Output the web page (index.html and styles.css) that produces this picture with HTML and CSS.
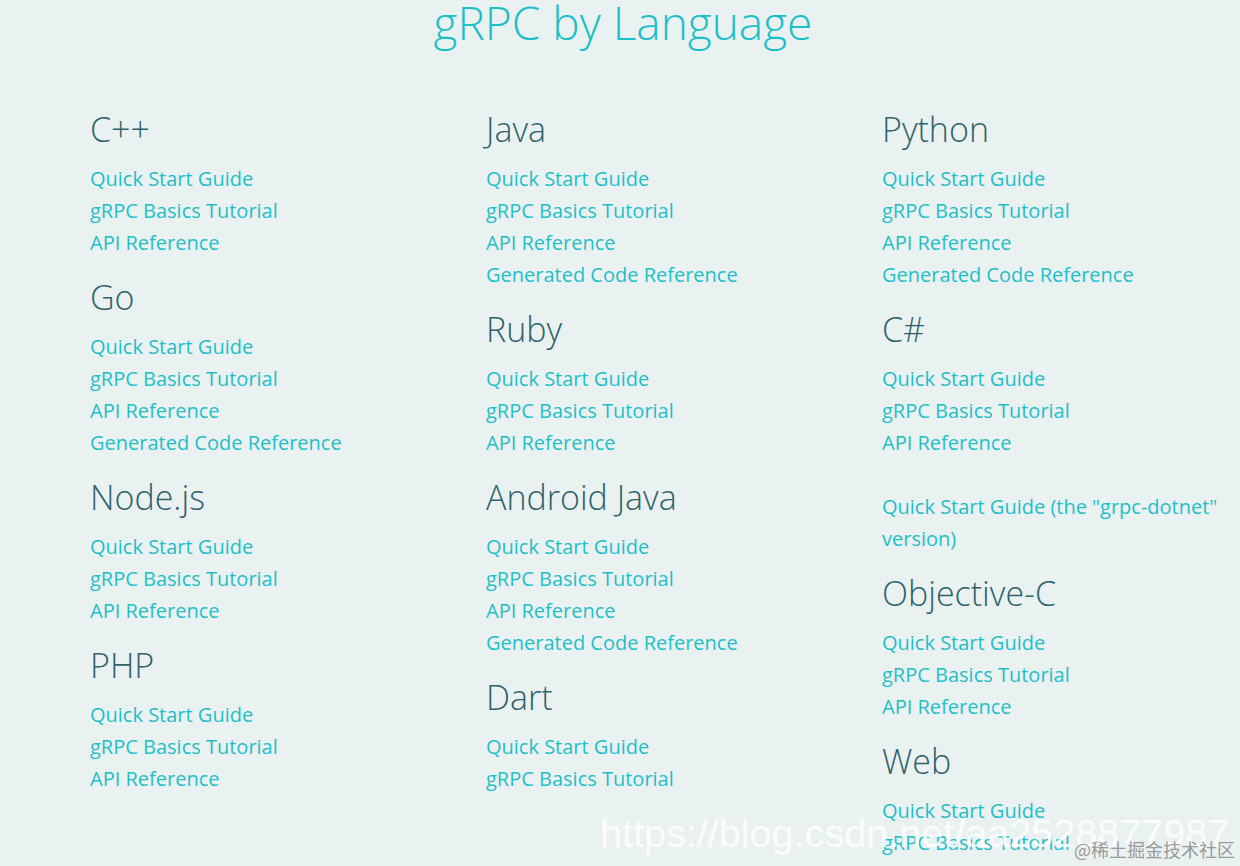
FILE: index.html
```html
<!DOCTYPE html>
<html>
<head>
<meta charset="utf-8">
<link rel="stylesheet" href="styles.css">
</head>
<body>
<div class="page">
  <h1 class="title">gRPC by Language</h1>
  <div class="langs">
    <div class="col">
      <section class="lang">
        <h3>C++</h3>
        <ul><li><a>Quick Start Guide</a></li><li><a>gRPC Basics Tutorial</a></li><li><a>API Reference</a></li></ul>
      </section>
      <section class="lang">
        <h3>Go</h3>
        <ul><li><a>Quick Start Guide</a></li><li><a>gRPC Basics Tutorial</a></li><li><a>API Reference</a></li><li><a>Generated Code Reference</a></li></ul>
      </section>
      <section class="lang">
        <h3>Node.js</h3>
        <ul><li><a>Quick Start Guide</a></li><li><a>gRPC Basics Tutorial</a></li><li><a>API Reference</a></li></ul>
      </section>
      <section class="lang">
        <h3>PHP</h3>
        <ul><li><a>Quick Start Guide</a></li><li><a>gRPC Basics Tutorial</a></li><li><a>API Reference</a></li></ul>
      </section>
    </div>
    <div class="col">
      <section class="lang">
        <h3>Java</h3>
        <ul><li><a>Quick Start Guide</a></li><li><a>gRPC Basics Tutorial</a></li><li><a>API Reference</a></li><li><a>Generated Code Reference</a></li></ul>
      </section>
      <section class="lang">
        <h3>Ruby</h3>
        <ul><li><a>Quick Start Guide</a></li><li><a>gRPC Basics Tutorial</a></li><li><a>API Reference</a></li></ul>
      </section>
      <section class="lang">
        <h3>Android Java</h3>
        <ul><li><a>Quick Start Guide</a></li><li><a>gRPC Basics Tutorial</a></li><li><a>API Reference</a></li><li><a>Generated Code Reference</a></li></ul>
      </section>
      <section class="lang">
        <h3>Dart</h3>
        <ul><li><a>Quick Start Guide</a></li><li><a>gRPC Basics Tutorial</a></li></ul>
      </section>
    </div>
    <div class="col">
      <section class="lang">
        <h3>Python</h3>
        <ul><li><a>Quick Start Guide</a></li><li><a>gRPC Basics Tutorial</a></li><li><a>API Reference</a></li><li><a>Generated Code Reference</a></li></ul>
      </section>
      <section class="lang">
        <h3>C#</h3>
        <ul><li><a>Quick Start Guide</a></li><li><a>gRPC Basics Tutorial</a></li><li><a>API Reference</a></li><li class="spaced"><a>Quick Start Guide (the "grpc-dotnet" version)</a></li></ul>
      </section>
      <section class="lang">
        <h3>Objective-C</h3>
        <ul><li><a>Quick Start Guide</a></li><li><a>gRPC Basics Tutorial</a></li><li><a>API Reference</a></li></ul>
      </section>
      <section class="lang">
        <h3>Web</h3>
        <ul><li><a>Quick Start Guide</a></li><li><a>gRPC Basics Tutorial</a></li></ul>
      </section>
    </div>
  </div>
</div>
<div class="watermark">https://blog.csdn.net/aa2528877987</div>
<div class="credit">@稀土掘金技术社区</div>
</body>
</html>
```
FILE: styles.css
```css
html, body {
  margin: 0;
  padding: 0;
  background: #eaf2f1;
  height: 100%;
  overflow: hidden;
}
body {
  font-family: "Open Sans", "Noto Sans", sans-serif;
  position: relative;
}
.page {
  width: 1240px;
}
.title {
  margin: -8px 0 0 0;
  padding-left: 6px;
  text-align: center;
  font-weight: 300;
  font-size: 46px;
  line-height: 60px;
  color: #1cbfc8;
}
.langs {
  display: grid;
  grid-template-columns: 396px 396px 1fr;
  padding-left: 90px;
  margin-top: 57px;
}
.lang h3 {
  margin: 18px 0 13px 0;
  font-weight: 300;
  font-size: 34px;
  line-height: 41px;
  color: #2f626b;
}
.lang:first-child h3 {
  margin-top: 0;
}
.lang ul {
  list-style: none;
  margin: 0;
  padding: 0;
}
.lang li {
  font-size: 20px;
  line-height: 32px;
}
.lang li.spaced {
  margin-top: 32px;
}
.lang a {
  color: #1fbfc8;
  text-decoration: none;
}
.watermark {
  position: absolute;
  left: 600px;
  top: 808px;
  font-family: "Liberation Sans", Arial, sans-serif;
  font-size: 39.6px;
  line-height: 50px;
  color: rgba(255, 255, 255, 0.85);
  white-space: nowrap;
}
.credit {
  position: absolute;
  left: 1074px;
  top: 837px;
  font-family: "Noto Sans CJK SC", sans-serif;
  font-size: 18px;
  line-height: 24px;
  color: #9a9a9a;
  white-space: nowrap;
}
```
